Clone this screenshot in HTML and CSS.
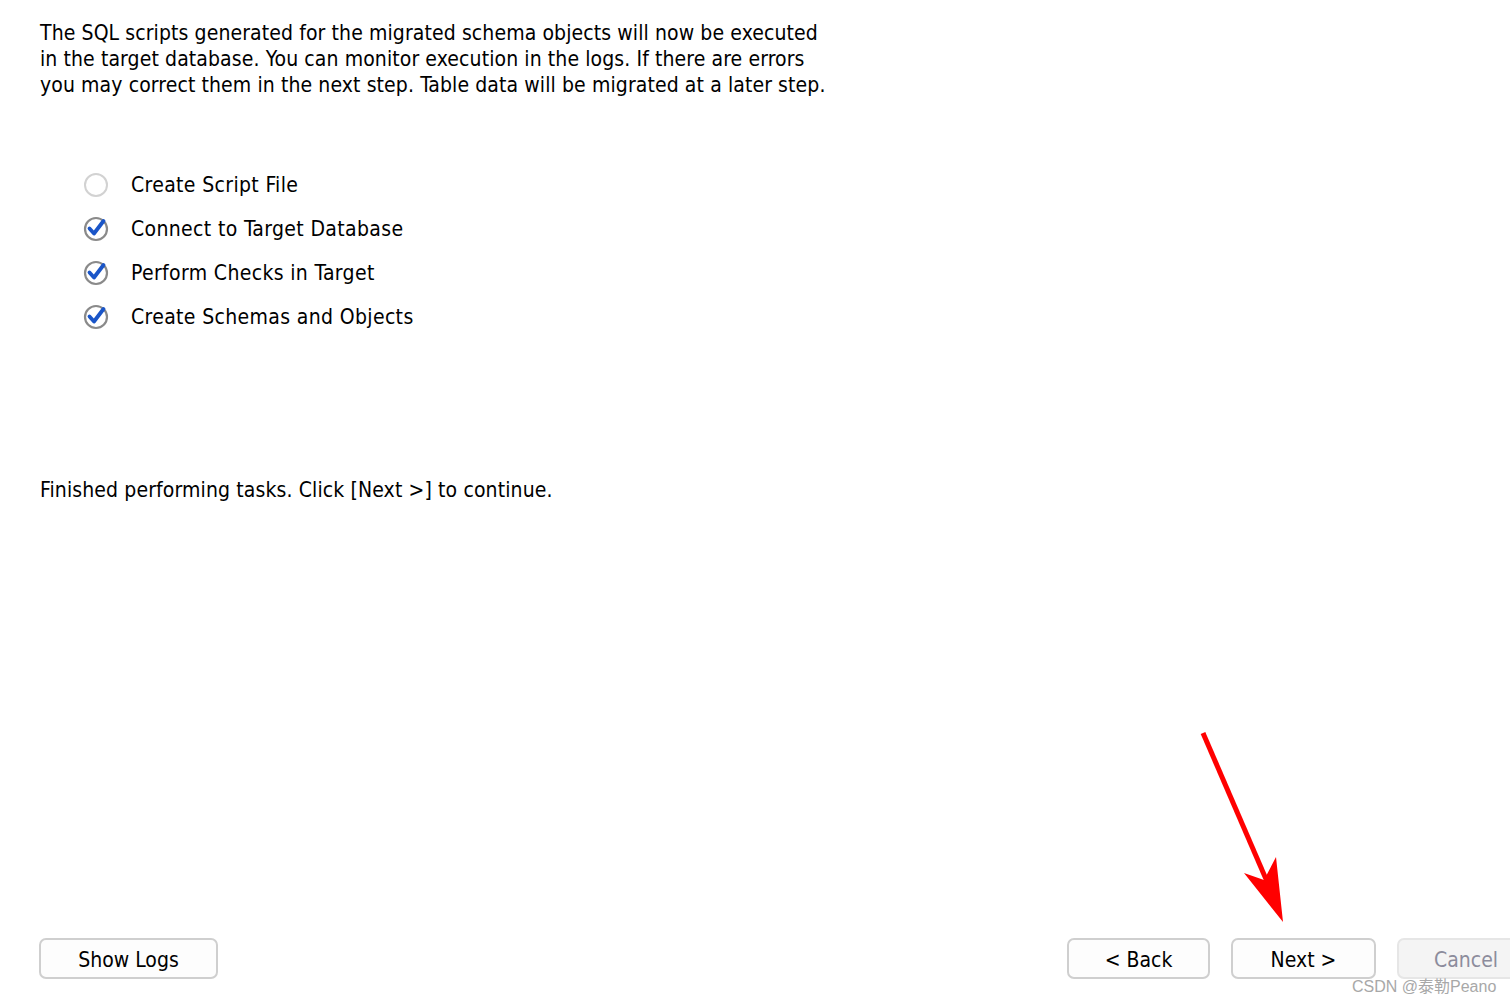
FILE: index.html
```html
<!DOCTYPE html>
<html>
<head>
<meta charset="utf-8">
<link rel="stylesheet" href="styles.css">
</head>
<body>
<div class="page">
  <p class="intro">The SQL scripts generated for the migrated schema objects will now be executed<br>in the target database. You can monitor execution in the logs. If there are errors<br>you may correct them in the next step. Table data will be migrated at a later step.</p>
  <ul class="tasks">
    <li class="task">
      <svg class="ico" width="26" height="26" viewBox="0 0 26 26"><circle cx="13" cy="13" r="11" fill="#fff" stroke="#d2d2d2" stroke-width="2"/></svg>
      <span>Create Script File</span>
    </li>
    <li class="task">
      <svg class="ico" width="26" height="26" viewBox="0 0 26 26"><circle cx="13" cy="13" r="11" fill="#fff" stroke="#8a8a8a" stroke-width="2.2"/><path d="M6.5 12.5 L11 17.5 L20.5 5" fill="none" stroke="#1a55c8" stroke-width="3.8" stroke-linecap="round" stroke-linejoin="round"/></svg>
      <span>Connect to Target Database</span>
    </li>
    <li class="task">
      <svg class="ico" width="26" height="26" viewBox="0 0 26 26"><circle cx="13" cy="13" r="11" fill="#fff" stroke="#8a8a8a" stroke-width="2.2"/><path d="M6.5 12.5 L11 17.5 L20.5 5" fill="none" stroke="#1a55c8" stroke-width="3.8" stroke-linecap="round" stroke-linejoin="round"/></svg>
      <span>Perform Checks in Target</span>
    </li>
    <li class="task">
      <svg class="ico" width="26" height="26" viewBox="0 0 26 26"><circle cx="13" cy="13" r="11" fill="#fff" stroke="#8a8a8a" stroke-width="2.2"/><path d="M6.5 12.5 L11 17.5 L20.5 5" fill="none" stroke="#1a55c8" stroke-width="3.8" stroke-linecap="round" stroke-linejoin="round"/></svg>
      <span>Create Schemas and Objects</span>
    </li>
  </ul>
  <p class="status">Finished performing tasks. Click [Next &gt;] to continue.</p>
  <div class="spacer"></div>
  <div class="footer">
    <button class="btn btn-logs">Show Logs</button>
    <div class="grow"></div>
    <button class="btn btn-back">&lt; Back</button>
    <button class="btn btn-next">Next &gt;</button>
    <button class="btn btn-cancel" disabled>Cancel</button>
  </div>
</div>
<svg class="arrow" width="1510" height="1004" viewBox="0 0 1510 1004">
  <line x1="1203" y1="733" x2="1272" y2="893" stroke="#ff0000" stroke-width="5"/>
  <polygon points="1283,922 1244,873 1264,880 1276,857" fill="#ff0000"/>
</svg>
<div class="watermark">CSDN @泰勒Peano</div>
</body>
</html>
```
FILE: styles.css
```css
html, body {
  margin: 0;
  padding: 0;
  background: #ffffff;
}
body {
  width: 1510px;
  height: 1004px;
  overflow: hidden;
  position: relative;
  font-family: "DejaVu Sans Condensed", "DejaVu Sans", "Noto Sans CJK SC", sans-serif;
  font-size: 21px;
  color: #000;
}
.page {
  height: 1004px;
  display: flex;
  flex-direction: column;
  padding: 20px 0 0 40px;
  box-sizing: border-box;
}
.intro {
  margin: 0;
  line-height: 26px;
  letter-spacing: 0.1px;
}
.tasks {
  list-style: none;
  margin: 74px 0 0 43px;
  padding: 0;
  display: flex;
  flex-direction: column;
  gap: 18px;
  letter-spacing: 0.35px;
}
.task {
  display: flex;
  align-items: center;
  height: 26px;
  gap: 22px;
}
.ico {
  flex: none;
}
.status {
  margin: 147px 0 0 0;
  line-height: 26px;
  letter-spacing: 0.12px;
}
.spacer {
  flex: 1;
}
.footer {
  display: flex;
  align-items: center;
  height: 40px;
  margin-bottom: 26px;
  margin-left: -1px;
}
.grow {
  flex: 1;
}
.btn {
  font-family: inherit;
  font-size: 21px;
  height: 41px;
  border: 2px solid #cfcfcf;
  border-radius: 7px;
  background: #fdfdfd;
  color: #000;
  padding: 3px 0 0 0;
  box-sizing: border-box;
}
.btn-logs { width: 179px; }
.btn-back { width: 143px; }
.btn-next { width: 145px; margin-left: 21px; }
.btn-cancel {
  width: 130px;
  margin-left: 21px;
  margin-right: -17px;
  text-align: left;
  padding-left: 35px;
  background: #f4f4f4;
  border-color: #e6e6e6;
  color: #8c8c9c;
}
.arrow {
  position: absolute;
  left: 0;
  top: 0;
  pointer-events: none;
}
.watermark {
  position: absolute;
  left: 1352px;
  top: 973px;
  font-family: "Liberation Sans", "Noto Sans CJK SC", sans-serif;
  font-size: 16px;
  color: #a8a8a8;
}
```
